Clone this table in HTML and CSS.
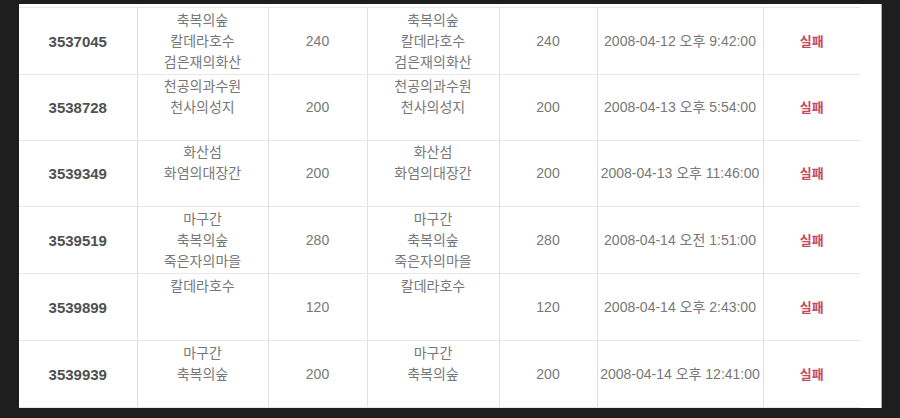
FILE: index.html
```html
<!DOCTYPE html>
<html lang="ko">
<head>
<meta charset="utf-8">
<link rel="stylesheet" href="styles.css">
</head>
<body>
<div class="frame">
  <div class="panel">
    <table class="log">
      <colgroup>
        <col class="c-id"><col class="c-name"><col class="c-num"><col class="c-name2"><col class="c-num2"><col class="c-date"><col class="c-res">
      </colgroup>
      <tbody>
        <tr>
          <td class="id">3537045</td>
          <td class="name">축복의숲<br>칼데라호수<br>검은재의화산</td>
          <td>240</td>
          <td class="name">축복의숲<br>칼데라호수<br>검은재의화산</td>
          <td>240</td>
          <td>2008-04-12 오후 9:42:00</td>
          <td class="res">실패</td>
        </tr>
        <tr class="short">
          <td class="id">3538728</td>
          <td class="name">천공의과수원<br>천사의성지<br>&nbsp;</td>
          <td>200</td>
          <td class="name">천공의과수원<br>천사의성지<br>&nbsp;</td>
          <td>200</td>
          <td>2008-04-13 오후 5:54:00</td>
          <td class="res">실패</td>
        </tr>
        <tr class="short">
          <td class="id">3539349</td>
          <td class="name">화산섬<br>화염의대장간<br>&nbsp;</td>
          <td>200</td>
          <td class="name">화산섬<br>화염의대장간<br>&nbsp;</td>
          <td>200</td>
          <td>2008-04-13 오후 11:46:00</td>
          <td class="res">실패</td>
        </tr>
        <tr>
          <td class="id">3539519</td>
          <td class="name">마구간<br>축복의숲<br>죽은자의마을</td>
          <td>280</td>
          <td class="name">마구간<br>축복의숲<br>죽은자의마을</td>
          <td>280</td>
          <td>2008-04-14 오전 1:51:00</td>
          <td class="res">실패</td>
        </tr>
        <tr>
          <td class="id">3539899</td>
          <td class="name">칼데라호수<br>&nbsp;<br>&nbsp;</td>
          <td>120</td>
          <td class="name">칼데라호수<br>&nbsp;<br>&nbsp;</td>
          <td>120</td>
          <td>2008-04-14 오후 2:43:00</td>
          <td class="res">실패</td>
        </tr>
        <tr>
          <td class="id">3539939</td>
          <td class="name">마구간<br>축복의숲<br>&nbsp;</td>
          <td>200</td>
          <td class="name">마구간<br>축복의숲<br>&nbsp;</td>
          <td>200</td>
          <td>2008-04-14 오후 12:41:00</td>
          <td class="res">실패</td>
        </tr>
      </tbody>
    </table>
  </div>
</div>
</body>
</html>
```
FILE: styles.css
```css
html, body {
  margin: 0;
  padding: 0;
  background: #1e1e1e;
}

.frame {
  width: 900px;
  height: 418px;
  padding: 4px 0 0 19px;
  box-sizing: border-box;
}

.panel {
  width: 863px;
  height: 404px;
  background: #ffffff;
  border-right: 1px solid #a8a8a8;
  box-sizing: border-box;
  padding-top: 3px;
}

.log {
  width: 841px;
  table-layout: fixed;
  border-collapse: collapse;
  font-family: "Liberation Sans", "Noto Sans CJK KR", sans-serif;
  font-size: 14px;
  line-height: 21px;
  color: #787878;
}

.c-id { width: 118px; }
.c-name { width: 131px; }
.c-num { width: 99px; }
.c-name2 { width: 132px; }
.c-num2 { width: 98px; }
.c-date { width: 166px; }
.c-res { width: 97px; }

.log td {
  height: 66px;
  padding: 0;
  text-align: center;
  vertical-align: middle;
  border-top: 1px solid #e8e8e8;
  border-bottom: 1px solid #e8e8e8;
  border-left: 1px solid #e0e0e0;
  border-right: 1px solid #e0e0e0;
  white-space: nowrap;
}

.log tr.short td {
  height: 65px;
}

.log td:first-child { border-left: none; }
.log td:last-child { border-right: none; }

.log td.id {
  font-size: 15px;
  font-weight: bold;
  color: #505050;
}

.log td.name {
  line-height: 21px;
}

.log td.res {
  font-size: 13px;
  font-weight: bold;
  color: #c64a5e;
}
```
